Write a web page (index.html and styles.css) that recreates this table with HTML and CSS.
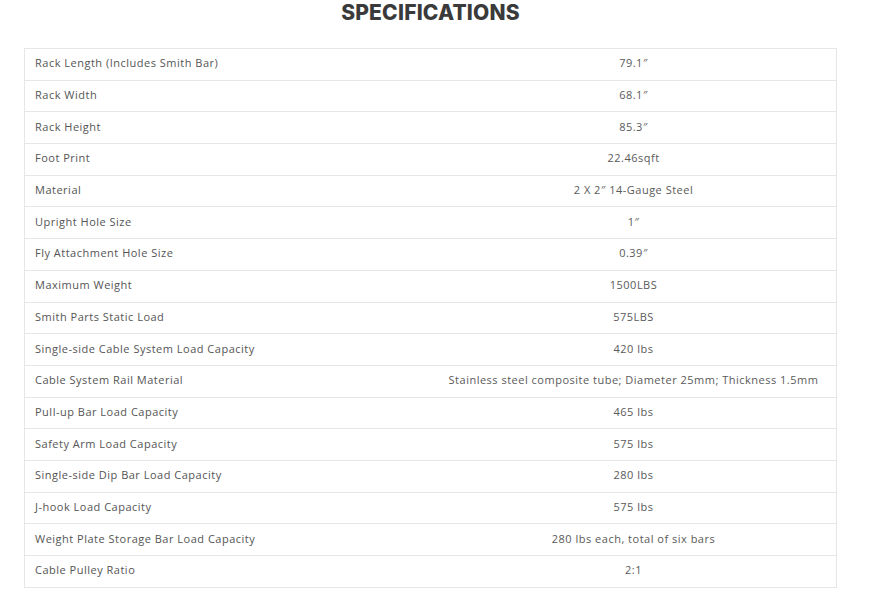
FILE: index.html
```html
<!DOCTYPE html>
<html>
<head>
<meta charset="utf-8">
<link rel="stylesheet" href="styles.css">
</head>
<body>
<div class="page">
  <h2 class="title">SPECIFICATIONS</h2>
  <table class="specs">
    <tbody>
      <tr><td>Rack Length (Includes Smith Bar)</td><td>79.1″</td></tr>
      <tr><td>Rack Width</td><td>68.1″</td></tr>
      <tr><td>Rack Height</td><td>85.3″</td></tr>
      <tr><td>Foot Print</td><td>22.46sqft</td></tr>
      <tr><td>Material</td><td>2 X 2″ 14-Gauge Steel</td></tr>
      <tr><td>Upright Hole Size</td><td>1″</td></tr>
      <tr><td>Fly Attachment Hole Size</td><td>0.39″</td></tr>
      <tr><td>Maximum Weight</td><td>1500LBS</td></tr>
      <tr><td>Smith Parts Static Load</td><td>575LBS</td></tr>
      <tr><td>Single-side Cable System Load Capacity</td><td>420 lbs</td></tr>
      <tr><td>Cable System Rail Material</td><td>Stainless steel composite tube; Diameter 25mm; Thickness 1.5mm</td></tr>
      <tr><td>Pull-up Bar Load Capacity</td><td>465 lbs</td></tr>
      <tr><td>Safety Arm Load Capacity</td><td>575 lbs</td></tr>
      <tr><td>Single-side Dip Bar Load Capacity</td><td>280 lbs</td></tr>
      <tr><td>J-hook Load Capacity</td><td>575 lbs</td></tr>
      <tr><td>Weight Plate Storage Bar Load Capacity</td><td>280 lbs each, total of six bars</td></tr>
      <tr><td>Cable Pulley Ratio</td><td>2:1</td></tr>
    </tbody>
  </table>
</div>
</body>
</html>
```
FILE: styles.css
```css
html, body { margin: 0; padding: 0; background: #fff; }
.page { width: 813px; padding: 0 35px 0 24px; font-family: "Open Sans", "Liberation Sans", sans-serif; }
.title {
  margin: 0;
  padding-top: 1px;
  height: 47px;
  text-align: center;
  font-family: Inter, "Open Sans", sans-serif;
  font-weight: 800;
  font-size: 21px;
  line-height: 24px;
  color: #3a3a3a;
  letter-spacing: 0.2px;
}
.specs {
  width: 813px;
  border-collapse: collapse;
  border: 1px solid #e6e6e6;
  table-layout: fixed;
}
.specs td {
  height: 27.7px;
  padding: 0 10px 3px;
  border-top: 1px solid #e6e6e6;
  font-size: 11px;
  color: #555;
  letter-spacing: 0.5px;
  vertical-align: middle;
}
.specs td:first-child { width: 386px; text-align: left; }
.specs td:last-child { text-align: center; color: #5a5a5a; }
```
